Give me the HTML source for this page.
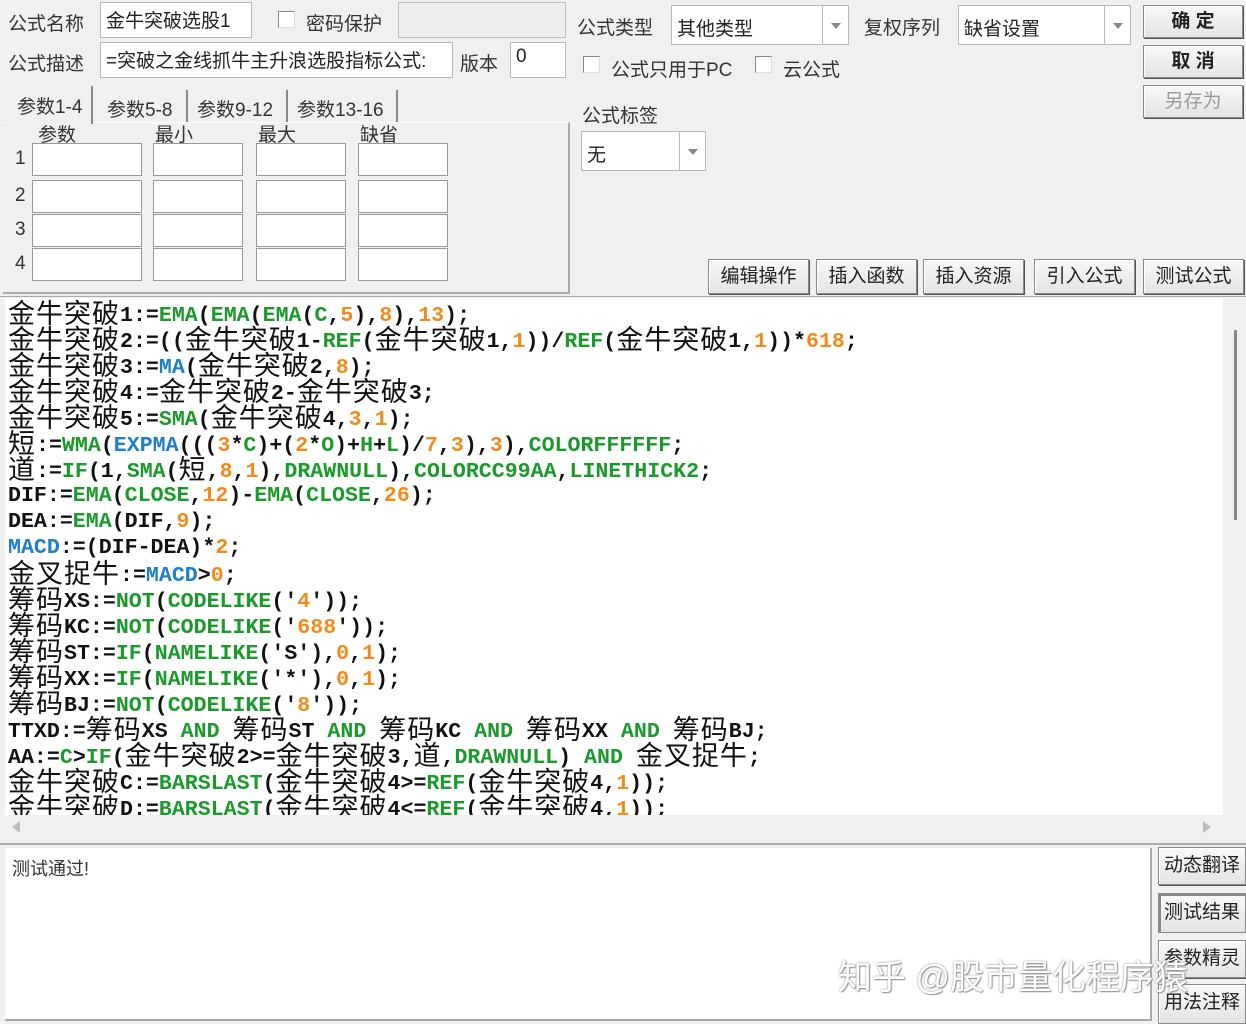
<!DOCTYPE html>
<html><head><meta charset="utf-8"><style>
*{box-sizing:border-box;margin:0;padding:0}
body{width:1246px;height:1024px;background:#f0f0f0;font-family:"Liberation Sans","Noto Sans CJK SC",sans-serif;font-size:19px;color:#222;position:relative;overflow:hidden}
.a{position:absolute}
.lbl{position:absolute;font-size:19px;color:#333;white-space:nowrap}
.inp{position:absolute;background:#fff;border:1px solid #b8b8b8;font-size:19px;padding:3px 5px;white-space:nowrap;overflow:hidden}
.cb{position:absolute;width:17px;height:17px;background:#fff;border:1px solid #888;border-right-color:#ddd;border-bottom-color:#ddd}
.btn{position:absolute;background:linear-gradient(#f8f8f8,#e4e4e4);border:1px solid #8a8a8a;box-shadow:inset 1px 1px 0 #fff,1px 1px 0 #555;text-align:center;font-size:19px;color:#222;white-space:nowrap}
.dd{position:absolute;right:0;top:0;bottom:0;width:26px;border-left:1px solid #bbb;background:#fff}
.dd:after{content:"";position:absolute;left:8px;top:50%;margin-top:-2px;border:5px solid transparent;border-top:6px solid #888}
.cell{position:absolute;width:90px;height:33px;background:#fff;border:1px solid #999}
#code{position:absolute;left:5px;top:298px;width:1218px;height:517px;background:#fff;overflow:hidden;font-family:"Liberation Mono",monospace;font-weight:bold;font-size:21.6px;color:#111;padding-left:3px;padding-top:3px}
#code div{height:26px;line-height:26px;white-space:pre;overflow:visible}
.k{font-family:"Noto Sans CJK SC",sans-serif;font-weight:normal;font-size:27px;letter-spacing:1px;display:inline-block;line-height:22px;vertical-align:-2px}
.g{color:#1a9a2a}.o{color:#f08a1a}.b{color:#1e7fc8}
</style></head><body>
<div class="lbl" style="left:8px;top:9px">公式名称</div>
<div class="inp" style="left:100px;top:2px;width:152px;height:36px">金牛突破选股1</div>
<div class="cb" style="left:278px;top:11px"></div>
<div class="lbl" style="left:306px;top:9px">密码保护</div>
<div class="a" style="left:398px;top:2px;width:168px;height:36px;background:#eee;border:1px solid #bbb"></div>
<div class="lbl" style="left:8px;top:49px">公式描述</div>
<div class="inp" style="left:100px;top:42px;width:353px;height:36px">=突破之金线抓牛主升浪选股指标公式:</div>
<div class="lbl" style="left:460px;top:49px">版本</div>
<div class="inp" style="left:510px;top:42px;width:56px;height:36px">0</div>

<div class="lbl" style="left:577px;top:13px">公式类型</div>
<div class="inp" style="left:671px;top:5px;width:178px;height:40px;padding-top:8px">其他类型<div class="dd"></div></div>
<div class="lbl" style="left:864px;top:13px">复权序列</div>
<div class="inp" style="left:958px;top:5px;width:173px;height:40px;padding-top:8px">缺省设置<div class="dd"></div></div>
<div class="cb" style="left:583px;top:56px"></div>
<div class="lbl" style="left:611px;top:55px">公式只用于PC</div>
<div class="cb" style="left:755px;top:56px"></div>
<div class="lbl" style="left:783px;top:55px">云公式</div>
<div class="lbl" style="left:582px;top:101px">公式标签</div>
<div class="inp" style="left:581px;top:131px;width:125px;height:40px;padding-top:8px">无<div class="dd"></div></div>

<div class="btn" style="left:1143px;top:5px;width:100px;height:33px;line-height:31px;font-weight:bold">确 定</div>
<div class="btn" style="left:1143px;top:45px;width:100px;height:33px;line-height:31px;font-weight:bold">取 消</div>
<div class="btn" style="left:1143px;top:85px;width:100px;height:33px;line-height:31px;color:#999">另存为</div>

<div class="a" style="left:3px;top:122px;width:567px;height:172px;border-right:2px solid #aaa;border-bottom:2px solid #aaa;border-top:1px solid #fff"></div>
<div class="a" style="left:8px;top:86px;width:85px;height:38px;background:#f0f0f0;border-right:2px solid #888"></div>
<div class="lbl" style="left:17px;top:92px">参数1-4</div>
<div class="lbl" style="left:107px;top:95px">参数5-8</div>
<div class="a" style="left:186px;top:90px;height:32px;border-right:2px solid #888"></div>
<div class="lbl" style="left:197px;top:95px">参数9-12</div>
<div class="a" style="left:286px;top:90px;height:32px;border-right:2px solid #888"></div>
<div class="lbl" style="left:297px;top:95px">参数13-16</div>
<div class="a" style="left:396px;top:90px;height:32px;border-right:2px solid #888"></div>
<div class="lbl" style="left:38px;top:120px">参数</div>
<div class="lbl" style="left:155px;top:120px">最小</div>
<div class="lbl" style="left:258px;top:120px">最大</div>
<div class="lbl" style="left:360px;top:120px">缺省</div>
<div class="lbl" style="left:15px;top:148px">1</div><div class="lbl" style="left:15px;top:185px">2</div><div class="lbl" style="left:15px;top:219px">3</div><div class="lbl" style="left:15px;top:253px">4</div>
<div class="cell" style="left:32px;top:143px;width:110px"></div><div class="cell" style="left:153px;top:143px"></div><div class="cell" style="left:256px;top:143px"></div><div class="cell" style="left:358px;top:143px"></div>
<div class="cell" style="left:32px;top:180px;width:110px"></div><div class="cell" style="left:153px;top:180px"></div><div class="cell" style="left:256px;top:180px"></div><div class="cell" style="left:358px;top:180px"></div>
<div class="cell" style="left:32px;top:214px;width:110px"></div><div class="cell" style="left:153px;top:214px"></div><div class="cell" style="left:256px;top:214px"></div><div class="cell" style="left:358px;top:214px"></div>
<div class="cell" style="left:32px;top:248px;width:110px"></div><div class="cell" style="left:153px;top:248px"></div><div class="cell" style="left:256px;top:248px"></div><div class="cell" style="left:358px;top:248px"></div>

<div class="btn" style="left:708px;top:259px;width:101px;height:35px;line-height:33px">编辑操作</div>
<div class="btn" style="left:816px;top:259px;width:101px;height:35px;line-height:33px">插入函数</div>
<div class="btn" style="left:923px;top:259px;width:101px;height:35px;line-height:33px">插入资源</div>
<div class="btn" style="left:1034px;top:259px;width:101px;height:35px;line-height:33px">引入公式</div>
<div class="btn" style="left:1143px;top:259px;width:101px;height:35px;line-height:33px">测试公式</div>

<div class="a" style="left:0;top:296px;width:1246px;height:1px;background:#aaa"></div>
<div id="code">
<div><span class="k">金牛突破</span>1:=<span class="g">EMA</span>(<span class="g">EMA</span>(<span class="g">EMA</span>(<span class="g">C</span>,<span class="o">5</span>),<span class="o">8</span>),<span class="o">13</span>);</div>
<div><span class="k">金牛突破</span>2:=((<span class="k">金牛突破</span>1-<span class="g">REF</span>(<span class="k">金牛突破</span>1,<span class="o">1</span>))/<span class="g">REF</span>(<span class="k">金牛突破</span>1,<span class="o">1</span>))*<span class="o">618</span>;</div>
<div><span class="k">金牛突破</span>3:=<span class="b">MA</span>(<span class="k">金牛突破</span>2,<span class="o">8</span>);</div>
<div><span class="k">金牛突破</span>4:=<span class="k">金牛突破</span>2-<span class="k">金牛突破</span>3;</div>
<div><span class="k">金牛突破</span>5:=<span class="g">SMA</span>(<span class="k">金牛突破</span>4,<span class="o">3</span>,<span class="o">1</span>);</div>
<div><span class="k">短</span>:=<span class="g">WMA</span>(<span class="b">EXPMA</span>(((<span class="o">3</span>*<span class="g">C</span>)+(<span class="o">2</span>*<span class="g">O</span>)+<span class="g">H</span>+<span class="g">L</span>)/<span class="o">7</span>,<span class="o">3</span>),<span class="o">3</span>),<span class="g">COLORFFFFFF</span>;</div>
<div><span class="k">道</span>:=<span class="g">IF</span>(1,<span class="g">SMA</span>(<span class="k">短</span>,<span class="o">8</span>,<span class="o">1</span>),<span class="g">DRAWNULL</span>),<span class="g">COLORCC99AA</span>,<span class="g">LINETHICK2</span>;</div>
<div>DIF:=<span class="g">EMA</span>(<span class="g">CLOSE</span>,<span class="o">12</span>)-<span class="g">EMA</span>(<span class="g">CLOSE</span>,<span class="o">26</span>);</div>
<div>DEA:=<span class="g">EMA</span>(DIF,<span class="o">9</span>);</div>
<div><span class="b">MACD</span>:=(DIF-DEA)*<span class="o">2</span>;</div>
<div><span class="k">金叉捉牛</span>:=<span class="b">MACD</span>&gt;<span class="o">0</span>;</div>
<div><span class="k">筹码</span>XS:=<span class="g">NOT</span>(<span class="g">CODELIKE</span>('<span class="o">4</span>'));</div>
<div><span class="k">筹码</span>KC:=<span class="g">NOT</span>(<span class="g">CODELIKE</span>('<span class="o">688</span>'));</div>
<div><span class="k">筹码</span>ST:=<span class="g">IF</span>(<span class="g">NAMELIKE</span>('S'),<span class="o">0</span>,<span class="o">1</span>);</div>
<div><span class="k">筹码</span>XX:=<span class="g">IF</span>(<span class="g">NAMELIKE</span>('*'),<span class="o">0</span>,<span class="o">1</span>);</div>
<div><span class="k">筹码</span>BJ:=<span class="g">NOT</span>(<span class="g">CODELIKE</span>('<span class="o">8</span>'));</div>
<div>TTXD:=<span class="k">筹码</span>XS <span class="g">AND</span> <span class="k">筹码</span>ST <span class="g">AND</span> <span class="k">筹码</span>KC <span class="g">AND</span> <span class="k">筹码</span>XX <span class="g">AND</span> <span class="k">筹码</span>BJ;</div>
<div>AA:=<span class="g">C</span>&gt;<span class="g">IF</span>(<span class="k">金牛突破</span>2&gt;=<span class="k">金牛突破</span>3,<span class="k">道</span>,<span class="g">DRAWNULL</span>) <span class="g">AND</span> <span class="k">金叉捉牛</span>;</div>
<div><span class="k">金牛突破</span>C:=<span class="g">BARSLAST</span>(<span class="k">金牛突破</span>4&gt;=<span class="g">REF</span>(<span class="k">金牛突破</span>4,<span class="o">1</span>));</div>
<div><span class="k">金牛突破</span>D:=<span class="g">BARSLAST</span>(<span class="k">金牛突破</span>4&lt;=<span class="g">REF</span>(<span class="k">金牛突破</span>4,<span class="o">1</span>));</div>
</div>
<div class="a" style="left:1234px;top:330px;width:3px;height:190px;background:#888"></div>
<div class="a" style="left:12px;top:821px;border:6px solid transparent;border-right:8px solid #bbb;border-left:0"></div>
<div class="a" style="left:1203px;top:821px;border:6px solid transparent;border-left:8px solid #bbb;border-right:0"></div>
<div class="a" style="left:0;top:843px;width:1246px;height:2px;background:#aaa"></div>

<div class="a" style="left:5px;top:848px;width:1147px;height:173px;background:#fff;border-right:2px solid #aaa;border-bottom:2px solid #aaa"></div>
<div class="lbl" style="left:12px;top:855px;font-size:18px">测试通过!</div>
<div class="btn" style="left:1158px;top:847px;width:88px;height:38px;line-height:36px">动态翻译</div>
<div class="btn" style="left:1158px;top:893px;width:88px;height:40px;line-height:38px;box-shadow:inset 2px 2px 0 #888">测试结果</div>
<div class="btn" style="left:1158px;top:940px;width:88px;height:38px;line-height:36px">参数精灵</div>
<div class="btn" style="left:1158px;top:984px;width:88px;height:40px;line-height:36px">用法注释</div>
<div class="lbl" style="left:838px;top:950px;font-size:34px;color:#fff;text-shadow:0 0 2px #888,1px 1px 1px #999">知乎 @股市量化程序猿</div>
</body></html>
